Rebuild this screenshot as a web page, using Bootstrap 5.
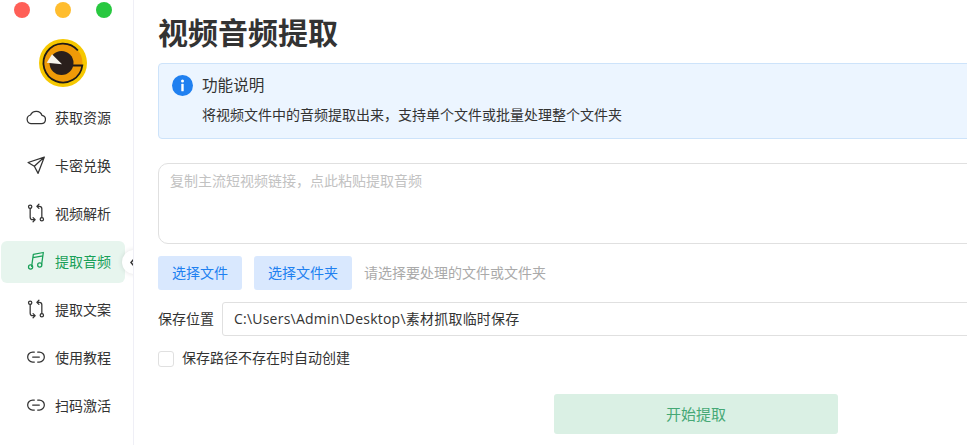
<!DOCTYPE html>
<html lang="zh">
<head>
<meta charset="utf-8">
<title>视频音频提取</title>
<link href="https://cdn.jsdelivr.net/npm/bootstrap@5.3.0/dist/css/bootstrap.min.css" rel="stylesheet">
<style>
html,body{height:445px;overflow:hidden}
body{font-family:"Open Sans","Noto Sans CJK SC",sans-serif;color:#333;background:#fff;font-size:14px}
.shell{height:445px;width:967px;overflow:hidden}
.side{width:134px;flex:none;border-right:1px solid #efeff6;position:relative;height:445px;overflow:hidden}
.traffic{gap:25px;padding:2px 0 0 14px;height:20px}
.dot{width:16px;height:16px;border-radius:50%;display:block}
.dot-r{background:#ff5f57}.dot-y{background:#ffbd2e}.dot-g{background:#28c840}
.brand{padding:19px 0 0 39px;height:77px}
.menu{padding-left:1px;gap:6px}
.menu .nav-link{width:124px;height:42px;display:flex;align-items:center;gap:9px;padding:0 0 2px 25px;color:#333;font-size:14px;border-radius:6px}
.menu .nav-link svg{width:20px;height:20px;flex:none;fill:none;stroke:currentColor;stroke-width:1.5;stroke-linecap:round;stroke-linejoin:round}
.menu .nav-link.active{background:#e7f5ee;color:#18a058}
.fold{position:absolute;left:122px;top:250px;width:24px;height:24px;border-radius:50%;background:#fff;box-shadow:0 0 5px rgba(0,0,0,.12);display:flex;align-items:center;padding-left:8px}
.panel{flex:none;width:1000px;padding:0 0 0 24px}
.page-title{font-size:30px;font-weight:700;line-height:42px;margin:12px 0 9px;color:#333}
.notice{background:#ecf5ff;border:1px solid #cde3fa;border-radius:4px;height:76px;padding:9px 13px;margin:0 0 24px;color:#333}
.notice-head{font-size:15.6px;line-height:24px;gap:9px}
.notice-body{font-size:14px;line-height:20px;margin:8px 0 0 30px}
.linkbox{height:81px;border:1px solid #e0e0e0;border-radius:10px;padding:7px 11px;font-size:14px;line-height:20px;resize:none;box-shadow:none;background:#fff}
.linkbox::placeholder{color:#c2c2c2}
.pick-row{margin-top:12px;gap:12px}
.pick{background:#d9e8fe;color:#2080f0;border:0;border-radius:3px;height:34px;font-size:14px;padding:0 14px 1px;line-height:32px}
.pick:hover{background:#d9e8fe;color:#2080f0}
.hint{color:#aaa;padding-bottom:2px}
.save-row{margin-top:12px;gap:8px}
.save-row label{padding-bottom:2px}
.path-box{height:34px;border:1px solid #e0e0e0;border-radius:3px;padding:0 11px 2px;font-size:14px;letter-spacing:.22px;color:#333;box-shadow:none}
.auto-row{margin:15px 0 0;padding:0;height:16px;min-height:16px;line-height:16px;gap:8px}
.auto-row .form-check-input{float:none;margin:0;width:16px;height:16px;border:1px solid #e0e0e0;border-radius:3px}
.auto-row .form-check-label{font-size:14px;color:#333;line-height:16px;padding-bottom:2px}
.go-wrap{padding:27px 0 0 396px}
.go{width:284px;height:40px;background:#daf0e4;color:#45a875;border:0;border-radius:3px;font-size:15px}
.go:hover{background:#daf0e4;color:#45a875}
</style>
</head>
<body>
<div class="shell d-flex">
<aside class="side">
  <div class="traffic d-flex"><span class="dot dot-r"></span><span class="dot dot-y"></span><span class="dot dot-g"></span></div>
  <div class="brand">
    <svg width="48" height="48" viewBox="0 0 48 48">
      <circle cx="24" cy="24" r="24" fill="#f6c800"/>
      <circle cx="24" cy="24" r="19.500" fill="#f09a07"/>
      <path d="M38.900 11.500A19.500 19.500 0 1 0 43.300 26.500H28" fill="none" stroke="#1f1a17" stroke-width="1.800"/>
      <circle cx="22.500" cy="24" r="12" fill="#2a1f1c"/>
      <path d="M13 15.300L23 25.300L7.700 23.700Z" fill="#f6f3ec"/>
    </svg>
  </div>
  <nav class="nav flex-column menu">
    <a class="nav-link" href="#"><svg viewBox="0 0 24 24"><path d="M6 20h12.500a5 5 0 0 0 .8-9.900A7.500 7.500 0 0 0 5.400 9.600 5.300 5.300 0 0 0 6 20z"/></svg>获取资源</a>
    <a class="nav-link" href="#"><svg viewBox="0 0 24 24"><path d="M22 2.500L2.500 9l7.500 4.500L14.500 22zM10 13.500L22 2.500"/></svg>卡密兑换</a>
    <a class="nav-link" href="#"><svg viewBox="0 0 24 24"><circle cx="5" cy="4.500" r="2"/><circle cx="19" cy="19.500" r="2"/><path d="M5 6.500V17a3 3 0 0 0 3 3h3M8.500 17.500L11 20l-2.500 2.500M19 17.500V7a3 3 0 0 0-3-3h-3M15.500 6.500L13 4l2.500-2.500"/></svg>视频解析</a>
    <a class="nav-link active" href="#"><svg viewBox="0 0 24 24"><path d="M6.800 18.500L8.800 4 20.800 1.800 18.800 15.800M8.300 8 20.300 5.800"/><circle cx="5.500" cy="19.200" r="2.500"/><circle cx="16.500" cy="16.800" r="2.500"/></svg>提取音频</a>
    <a class="nav-link" href="#"><svg viewBox="0 0 24 24"><circle cx="5" cy="4.500" r="2"/><circle cx="19" cy="19.500" r="2"/><path d="M5 6.500V17a3 3 0 0 0 3 3h3M8.500 17.500L11 20l-2.500 2.500M19 17.500V7a3 3 0 0 0-3-3h-3M15.500 6.500L13 4l2.500-2.500"/></svg>提取文案</a>
    <a class="nav-link" href="#"><svg viewBox="0 0 24 24"><path d="M10 6H8a6 6 0 0 0 0 12h2M14 6h2a6 6 0 0 1 0 12h-2M8 12h8"/></svg>使用教程</a>
    <a class="nav-link" href="#"><svg viewBox="0 0 24 24"><path d="M10 6H8a6 6 0 0 0 0 12h2M14 6h2a6 6 0 0 1 0 12h-2M8 12h8"/></svg>扫码激活</a>
  </nav>
  <div class="fold"><svg width="5" height="9" viewBox="0 0 5 9"><path d="M4 1L1 4.500 4 8" fill="none" stroke="#333" stroke-width="1.500"/></svg></div>
</aside>
<main class="panel">
  <h1 class="page-title">视频音频提取</h1>
  <div class="alert notice" role="alert">
    <div class="d-flex align-items-center notice-head">
      <svg width="21" height="21" viewBox="0 0 21 21"><circle cx="10.500" cy="10.500" r="10.500" fill="#2080f0"/><rect x="9.300" y="8.800" width="2.400" height="7.500" rx=".6" fill="#fff"/><circle cx="10.500" cy="6" r="1.500" fill="#fff"/></svg>
      <span>功能说明</span>
    </div>
    <div class="notice-body">将视频文件中的音频提取出来，支持单个文件或批量处理整个文件夹</div>
  </div>
  <textarea class="form-control linkbox" placeholder="复制主流短视频链接，点此粘贴提取音频"></textarea>
  <div class="d-flex align-items-center pick-row">
    <button class="btn pick" type="button">选择文件</button>
    <button class="btn pick" type="button">选择文件夹</button>
    <span class="hint">请选择要处理的文件或文件夹</span>
  </div>
  <div class="d-flex align-items-center save-row">
    <label class="text-nowrap" for="savePath">保存位置</label>
    <input id="savePath" class="form-control path-box" type="text" value="C:\Users\Admin\Desktop\素材抓取临时保存">
  </div>
  <div class="form-check d-flex align-items-center auto-row">
    <input id="autoMake" class="form-check-input" type="checkbox">
    <label class="form-check-label" for="autoMake">保存路径不存在时自动创建</label>
  </div>
  <div class="go-wrap"><button class="btn go" type="button">开始提取</button></div>
</main>
</div>
<script src="https://cdn.jsdelivr.net/npm/bootstrap@5.3.0/dist/js/bootstrap.bundle.min.js"></script>
</body>
</html>
